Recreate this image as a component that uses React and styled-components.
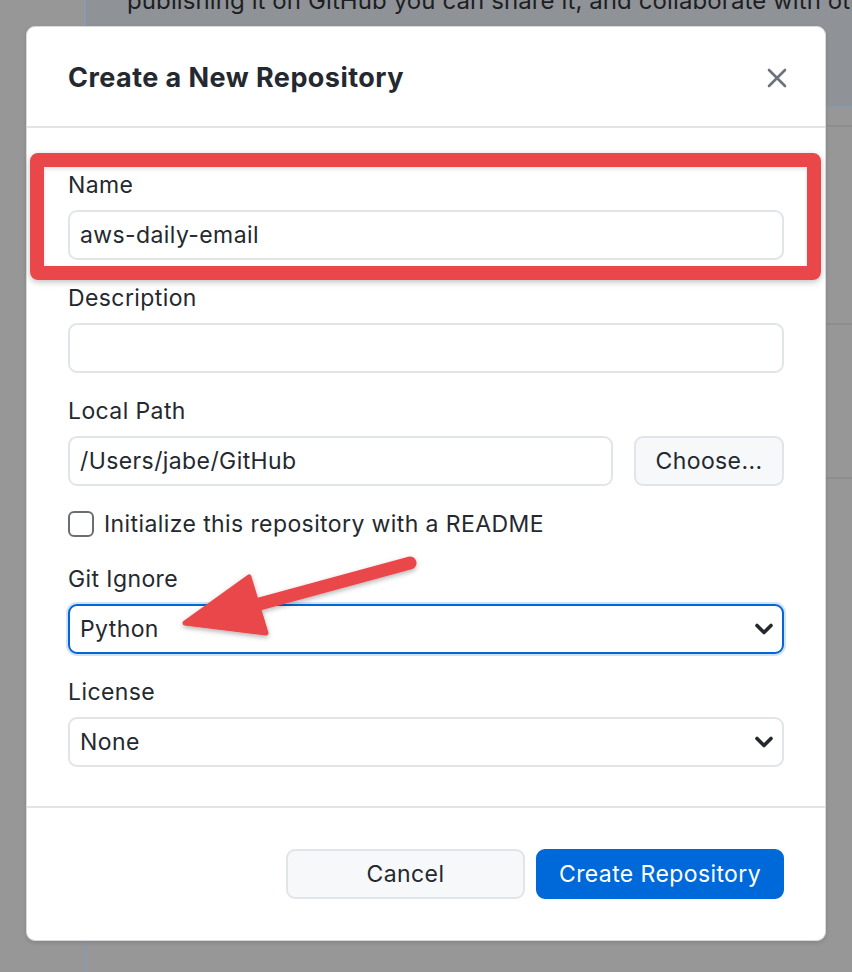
import React from "react";
import styled, { createGlobalStyle } from "styled-components";

const GlobalStyle = createGlobalStyle`
  html, body {
    margin: 0;
    padding: 0;
    background: #979797;
    font-family: Inter, "Noto Sans", "Liberation Sans", sans-serif;
    color: #24292f;
  }
  * { box-sizing: border-box; }
`;

const Page = styled.div`
  position: relative;
  width: 852px;
  height: 972px;
  overflow: hidden;
  background: #979797;
`;

// the dimmed window that sits behind the modal
const BackPanel = styled.div`
  margin-left: 84px;
  height: 100%;
  border-left: 2px solid #8c9ab0;
  display: flex;
  flex-direction: column;
`;

const TopStrip = styled.div`
  height: 107px;
  background: #8f9297;
  border-bottom: 1px solid #8a97ab;
  overflow: hidden;
  padding-left: 41px;
  font-size: 24px;
  letter-spacing: 0.1px;
  color: #1d1f23;
  white-space: nowrap;
  p {
    margin: -14px 0 0;
    line-height: 30px;
  }
`;

const BackRow = styled.div`
  height: ${(p) => p.h}px;
  border-bottom: 2px solid #8d8d8d;
`;

const Dialog = styled.div`
  position: absolute;
  left: 26px;
  top: 26px;
  width: 800px;
  height: 915px;
  background: #fff;
  border: 1px solid #d7d9dc;
  border-radius: 9px;
  box-shadow: 0 2px 4px rgba(0, 0, 0, 0.12);
  display: flex;
  flex-direction: column;
`;

const Header = styled.header`
  height: 101px;
  flex: none;
  display: flex;
  align-items: center;
  justify-content: space-between;
  padding: 2px 30px 0 41px;
  border-bottom: 2px solid #e1e4e8;
`;

const Title = styled.h1`
  margin: 0;
  font-size: 27px;
  font-weight: 700;
  letter-spacing: 0.45px;
  color: #24292f;
`;

const CloseButton = styled.button`
  width: 36px;
  height: 36px;
  border: none;
  background: none;
  padding: 0;
  display: flex;
  align-items: center;
  justify-content: center;
`;

const Body = styled.div`
  flex: none;
  padding: 44px 41px 39px;
  border-bottom: 2px solid #e1e4e8;
  display: flex;
  flex-direction: column;
  font-size: 23px;
  letter-spacing: 0.4px;
`;

const Field = styled.div`
  display: flex;
  flex-direction: column;
  gap: 12px;
  margin-bottom: ${(p) => p.mb ?? 25}px;
`;

const Label = styled.label`
  line-height: 26px;
  color: #24292f;
`;

const Input = styled.div`
  height: 50px;
  flex: ${(p) => (p.grow ? 1 : "none")};
  display: flex;
  align-items: center;
  padding: 0 10px;
  border: 2px solid #e1e4e8;
  border-radius: 9px;
  color: #24292f;
  background: #fff;
`;

const Select = styled(Input)`
  justify-content: space-between;
  padding-right: 8px;
  border-color: ${(p) => (p.focused ? "#0366d6" : "#e1e4e8")};
  box-shadow: ${(p) => (p.focused ? "0 0 0 2px rgba(3, 102, 214, 0.18)" : "none")};
`;

const PathRow = styled.div`
  display: flex;
  gap: 21px;
`;

const Button = styled.button`
  height: 50px;
  width: ${(p) => p.w}px;
  border-radius: 9px;
  font-family: inherit;
  font-size: 23px;
  letter-spacing: 0.4px;
  border: 2px solid ${(p) => (p.primary ? "#0069d9" : "#e1e4e8")};
  background: ${(p) => (p.primary ? "#0069d9" : "#f6f8fa")};
  color: ${(p) => (p.primary ? "#fff" : "#24292f")};
  padding: 0;
`;

const CheckRow = styled.div`
  height: 26px;
  display: flex;
  align-items: center;
  gap: 10px;
  margin-bottom: 29px;
  color: #24292f;
`;

const Checkbox = styled.span`
  width: 26px;
  height: 26px;
  border: 2px solid #6a6e73;
  border-radius: 6px;
  background: #fff;
`;

const Footer = styled.footer`
  flex: 1;
  display: flex;
  justify-content: flex-end;
  gap: 11px;
  padding: 41px 41px 0;
`;

// annotation layer: highlight box around the name field
const Highlight = styled.div`
  position: absolute;
  left: 30px;
  top: 153px;
  width: 791px;
  height: 127px;
  border: 14px solid #ea474b;
  border-radius: 8px;
  box-shadow: 0 2px 6px rgba(0, 0, 0, 0.25), inset 0 2px 4px rgba(0, 0, 0, 0.12);
  pointer-events: none;
`;

const ArrowLayer = styled.svg`
  position: absolute;
  left: 0;
  top: 0;
  pointer-events: none;
`;

const Chevron = () => (
  <svg width="20" height="14" viewBox="0 0 20 14">
    <path d="M3 3.5 L10 10.5 L17 3.5" fill="none" stroke="#24292f" strokeWidth="3.6" strokeLinecap="round" strokeLinejoin="round" />
  </svg>
);

export default function App() {
  return (
    <Page>
      <GlobalStyle />
      <BackPanel>
        <TopStrip>
          <p>publishing it on GitHub you can share it, and collaborate with others.</p>
        </TopStrip>
        <BackRow h={20} />
        <BackRow h={198} />
        <BackRow h={154} />
      </BackPanel>

      <Dialog>
        <Header>
          <Title>Create a New Repository</Title>
          <CloseButton>
            <svg width="20" height="20" viewBox="0 0 20 20">
              <path d="M2 2 L18 18 M18 2 L2 18" stroke="#6a737d" strokeWidth="2.6" strokeLinecap="round" />
            </svg>
          </CloseButton>
        </Header>
        <Body>
          <Field>
            <Label>Name</Label>
            <Input>aws-daily-email</Input>
          </Field>
          <Field>
            <Label>Description</Label>
            <Input />
          </Field>
          <Field>
            <Label>Local Path</Label>
            <PathRow>
              <Input grow>/Users/jabe/GitHub</Input>
              <Button w={150}>Choose...</Button>
            </PathRow>
          </Field>
          <CheckRow>
            <Checkbox />
            Initialize this repository with a README
          </CheckRow>
          <Field>
            <Label>Git Ignore</Label>
            <Select focused>
              Python
              <Chevron />
            </Select>
          </Field>
          <Field mb={0}>
            <Label>License</Label>
            <Select>
              None
              <Chevron />
            </Select>
          </Field>
        </Body>
        <Footer>
          <Button w={239}>Cancel</Button>
          <Button w={248} primary>Create Repository</Button>
        </Footer>
      </Dialog>

      <Highlight />
      <ArrowLayer width="852" height="972" viewBox="0 0 852 972">
        <defs>
          <filter id="arrowShadow" x="-20%" y="-20%" width="140%" height="140%">
            <feDropShadow dx="0" dy="2" stdDeviation="2.5" floodColor="#000" floodOpacity="0.3" />
          </filter>
        </defs>
        <g filter="url(#arrowShadow)" fill="#ea474b" stroke="#ea474b" strokeLinejoin="round">
          <path d="M410 563 L252 606" strokeWidth="13" strokeLinecap="round" fill="none" />
          <polygon points="185,623 249,577 266,633" strokeWidth="5" />
        </g>
      </ArrowLayer>
    </Page>
  );
}
